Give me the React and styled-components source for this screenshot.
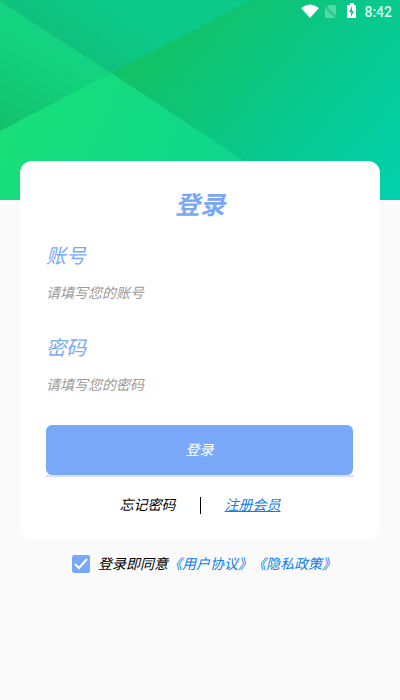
import React, { useState } from "react";
import styled, { createGlobalStyle, css } from "styled-components";

const GlobalStyle = createGlobalStyle`
  *, *::before, *::after { box-sizing: border-box; }
  body {
    margin: 0;
    background: #fafafa;
    font-family: Roboto, "Noto Sans CJK SC", sans-serif;
    font-size: 14px;
    line-height: 20px;
    text-spacing-trim: space-all;
  }
`;

const Page = styled.div`
  display: flex;
  flex-direction: column;
`;

const Hero = styled.header`
  display: grid;
  height: 200px;

  > * {
    grid-area: 1 / 1;
    min-width: 0;
  }
`;

const HeroArt = styled.svg`
  display: block;
  width: 100%;
  height: 200px;
`;

const StatusBar = styled.div`
  display: flex;
  align-items: center;
  justify-content: flex-end;
  height: 24px;
  padding-right: 8px;
  color: #ffffff;
  z-index: 1;
`;

const StatusIcon = styled.svg`
  display: block;
  width: 18px;
  height: 18px;
  margin-right: 3px;
`;

const Clock = styled.time`
  font-weight: 500;
  color: #dcfbef;
`;

const Card = styled.form`
  display: flex;
  flex-direction: column;
  margin: -39px 20px 0;
  padding: 29px 26px 25px;
  background: #ffffff;
  border-radius: 12px;
  z-index: 1;
`;

const italic = css`
  font-style: italic;
`;

const Title = styled.h1`
  ${italic}
  margin: 0 0 20px;
  font-size: 25px;
  line-height: 32px;
  font-weight: 700;
  text-align: center;
  color: #7aa7f5;
`;

const Field = styled.label`
  display: flex;
  flex-direction: column;
  gap: 2px;
  margin-bottom: 22px;

  &:last-of-type {
    margin-bottom: 21px;
  }
`;

const FieldName = styled.span`
  ${italic}
  font-size: 20px;
  line-height: 28px;
  color: #7aa9f6;
`;

const FieldInput = styled.input`
  ${italic}
  width: 100%;
  height: 40px;
  padding: 2px 0 0;
  border: 0;
  outline: 0;
  background: transparent;
  font-family: inherit;
  font-size: 14px;
  color: #222222;

  &::placeholder {
    color: #999999;
    opacity: 1;
  }
`;

const SubmitArea = styled.div`
  padding-right: 1px;
  border-bottom: 2px solid #d6e0f3;
`;

const Submit = styled.button`
  ${italic}
  display: block;
  width: 100%;
  height: 50px;
  padding: 0 0 2px;
  border: 0;
  border-radius: 6px;
  background: #79a8f8;
  color: #ffffff;
  font-family: inherit;
  font-size: 14px;
`;

const Links = styled.nav`
  display: flex;
  align-items: center;
  justify-content: center;
  gap: 24px;
  margin-top: 18px;
`;

const TextLink = styled.a`
  ${italic}
  color: ${({ $accent }) => ($accent ? "#0b80e8" : "#000000")};
  text-decoration: ${({ $underlined }) => ($underlined ? "underline" : "none")};
`;

const Divider = styled.span`
  width: 1px;
  height: 17px;
  background: #000000;
`;

const Agreement = styled.div`
  display: flex;
  align-items: center;
  justify-content: center;
  margin-top: 14px;
  padding-left: 8px;
`;

const Tick = styled.input`
  appearance: none;
  width: 18px;
  height: 18px;
  margin: 0 8px 0 0;
  border: 1px solid #79a8f8;
  border-radius: 2px;
  background: #ffffff;

  &:checked {
    background: #79a8f8
      url("data:image/svg+xml,%3Csvg xmlns='http://www.w3.org/2000/svg' viewBox='0 0 16 16' fill='none' stroke='white' stroke-width='2'%3E%3Cpath d='M2 8l4 4 8-9'/%3E%3C/svg%3E")
      center / 16px 16px no-repeat;
  }
`;

const AgreementText = styled.label`
  ${italic}
  color: #000000;
`;

function HeroBackground() {
  return (
    <HeroArt viewBox="0 0 400 200" preserveAspectRatio="none" aria-hidden="true">
      <defs>
        <linearGradient id="right" gradientUnits="userSpaceOnUse" x1="160" y1="50" x2="360" y2="220">
          <stop offset="0" stopColor="#11c267" />
          <stop offset="0.45" stopColor="#0ac787" />
          <stop offset="1" stopColor="#03d1aa" />
        </linearGradient>
        <linearGradient id="top" gradientUnits="userSpaceOnUse" x1="55" y1="40" x2="90" y2="-10">
          <stop offset="0" stopColor="#10c07c" />
          <stop offset="1" stopColor="#0cc98a" />
        </linearGradient>
        <linearGradient id="left" gradientUnits="userSpaceOnUse" x1="-10" y1="125" x2="35" y2="45">
          <stop offset="0" stopColor="#12c06b" />
          <stop offset="1" stopColor="#13d380" />
        </linearGradient>
        <linearGradient id="bottom" gradientUnits="userSpaceOnUse" x1="20" y1="110" x2="200" y2="190">
          <stop offset="0" stopColor="#18df7a" />
          <stop offset="1" stopColor="#0fd68a" />
        </linearGradient>
      </defs>
      <path d="M0 0H400V200H0Z" fill="url(#right)" />
      <path d="M0 0H251L111 73L0 1Z" fill="url(#top)" />
      <path d="M0 1L111 73L0 131Z" fill="url(#left)" />
      <path d="M0 131L111 73L304 200H0Z" fill="url(#bottom)" />
    </HeroArt>
  );
}

function WifiIcon() {
  return (
    <StatusIcon viewBox="0 0 18 18" fill="currentColor" aria-hidden="true">
      <path d="M0 5Q9 -2 18 5L9 15Z" />
    </StatusIcon>
  );
}

function NoSimIcon() {
  return (
    <StatusIcon viewBox="0 0 18 18" fill="currentColor" opacity="0.3" aria-hidden="true">
      <path d="M7 2H14V13L5 4ZM3 5L13 15H3Z" />
      <path d="M2 3L15 16" fill="none" stroke="currentColor" strokeWidth="0.6" />
    </StatusIcon>
  );
}

function BatteryIcon() {
  return (
    <StatusIcon viewBox="0 0 18 18" aria-hidden="true">
      <path d="M7 0H11V2H13V15H4V2H7Z" fill="currentColor" />
      <path d="M9 3L6 9H8V14L11 8H9Z" fill="#0ac98a" />
    </StatusIcon>
  );
}

export default function App() {
  const [agreed, setAgreed] = useState(true);

  return (
    <Page>
      <GlobalStyle />
      <Hero>
        <HeroBackground />
        <StatusBar>
          <WifiIcon />
          <NoSimIcon />
          <BatteryIcon />
          <Clock>8:42</Clock>
        </StatusBar>
      </Hero>
      <Card onSubmit={(event) => event.preventDefault()}>
        <Title>登录</Title>
        <Field>
          <FieldName>账号</FieldName>
          <FieldInput type="text" placeholder="请填写您的账号" />
        </Field>
        <Field>
          <FieldName>密码</FieldName>
          <FieldInput type="password" placeholder="请填写您的密码" />
        </Field>
        <SubmitArea>
          <Submit type="submit">登录</Submit>
        </SubmitArea>
        <Links>
          <TextLink href="#forgot">忘记密码</TextLink>
          <Divider />
          <TextLink href="#register" $accent $underlined>注册会员</TextLink>
        </Links>
      </Card>
      <Agreement>
        <Tick
          id="agree"
          type="checkbox"
          checked={agreed}
          onChange={(event) => setAgreed(event.target.checked)}
        />
        <AgreementText htmlFor="agree">登录即同意</AgreementText>
        <TextLink href="#terms" $accent>《用户协议》</TextLink>
        <TextLink href="#privacy" $accent>《隐私政策》</TextLink>
      </Agreement>
    </Page>
  );
}
